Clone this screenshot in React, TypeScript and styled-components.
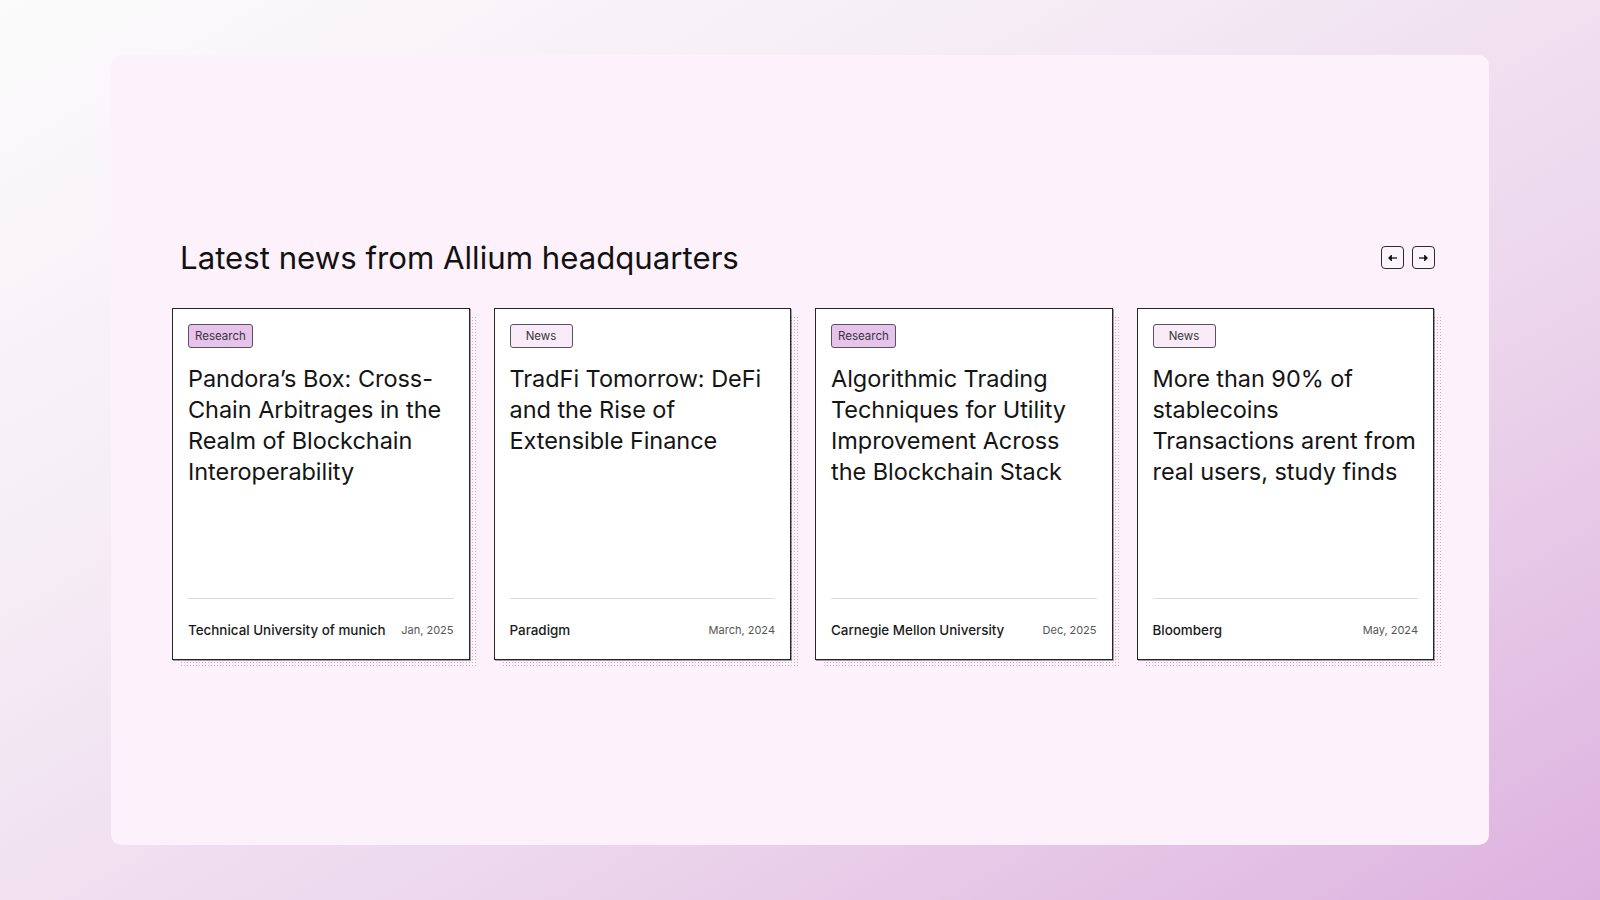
import React from "react";
import styled, { createGlobalStyle } from "styled-components";

const Global = createGlobalStyle`
  html, body { margin: 0; padding: 0; }
  body {
    font-family: "Inter", "Noto Sans", sans-serif;
    color: #141414;
  }
  * { box-sizing: border-box; }
`;

const Page = styled.div`
  width: 1600px;
  height: 900px;
  padding: 55px 111px 55px 111px;
  background: linear-gradient(150deg, #fbfbfb 0%, #f6eef6 30%, #ecd6ec 65%, #ddb2df 100%);
  display: flex;
`;

const Panel = styled.section`
  flex: 1;
  min-width: 0;
  background: #fdf1fb;
  border-radius: 10px;
  display: flex;
  flex-direction: column;
  justify-content: center;
  padding: 6px 46px 0 61px;
  gap: 31px;
`;

const HeaderRow = styled.div`
  display: flex;
  align-items: center;
  justify-content: space-between;
  padding-left: 8px;
  padding-right: 8px;
`;

const Heading = styled.h2`
  margin: 0;
  font-size: 31.2px;
  font-weight: 400;
  letter-spacing: 0;
  color: #111;
`;

const Nav = styled.div`
  display: flex;
  gap: 8px;
`;

const dots = `radial-gradient(circle, rgba(120, 110, 120, 0.45) 0.7px, transparent 1px) 0 0 / 3px 3px`;

const NavButton = styled.button`
  position: relative;
  width: 23px;
  height: 23px;
  padding: 0;
  border: 1px solid #2b2b2b;
  border-radius: 4px;
  background: #fdf3fb;
  display: flex;
  align-items: center;
  justify-content: center;
  cursor: pointer;
  &::after {
    content: "";
    position: absolute;
    left: 3px;
    top: 3px;
    right: -4px;
    bottom: -4px;
    background: ${dots};
    z-index: -1;
    border-radius: 4px;
  }
`;

const Cards = styled.div`
  display: grid;
  grid-template-columns: repeat(4, 1fr);
  gap: 24px;
  margin-right: 9px;
  margin-bottom: 8px;
`;

const CardWrap = styled.div`
  position: relative;
  height: 352px;
  z-index: 0;
  &::before {
    content: "";
    position: absolute;
    left: 8px;
    top: 8px;
    right: -8px;
    bottom: -8px;
    background: ${dots};
    z-index: -1;
  }
`;

const Card = styled.article`
  height: 100%;
  background: #ffffff;
  border: 1px solid #262626;
  box-shadow: 1px 1px 0 rgba(0, 0, 0, 0.35);
  padding: 15px 15px 0 15px;
  display: flex;
  flex-direction: column;
`;

const Tag = styled.span<{ $kind: "Research" | "News" }>`
  align-self: flex-start;
  height: 24px;
  padding: 0 6px;
  min-width: 63px;
  display: inline-flex;
  align-items: center;
  justify-content: center;
  font-size: 11.5px;
  color: #3a3340;
  border: 1px solid #5a5060;
  border-radius: 3px;
  background: ${(p) => (p.$kind === "Research" ? "#e6c3ea" : "#f9eaf8")};
`;

const Title = styled.h3`
  margin: 15px -2px 0 0;
  font-size: 23.5px;
  line-height: 31px;
  font-weight: 400;
  letter-spacing: -0.05px;
  color: #141414;
  flex: 1;
`;

const Footer = styled.div`
  border-top: 1px solid #dcdcdc;
  height: 61px;
  display: flex;
  align-items: center;
  justify-content: space-between;
  padding-top: 2px;
`;

const Source = styled.span`
  font-size: 13.4px;
  font-weight: 500;
  color: #1a1a1a;
`;

const DateText = styled.span`
  font-size: 11px;
  color: #555;
`;

const Arrow = ({ dir }: { dir: "left" | "right" }) => (
  <svg width="11" height="8" viewBox="0 0 11 8" fill="none">
    {dir === "left" ? (
      <>
        <path d="M10 4H2" stroke="#111" strokeWidth="1.3" />
        <path d="M4.5 1L1.5 4L4.5 7Z" fill="#111" stroke="#111" strokeWidth="0.8" strokeLinejoin="round" />
      </>
    ) : (
      <>
        <path d="M1 4H9" stroke="#111" strokeWidth="1.3" />
        <path d="M6.5 1L9.5 4L6.5 7Z" fill="#111" stroke="#111" strokeWidth="0.8" strokeLinejoin="round" />
      </>
    )}
  </svg>
);

type Item = { tag: "Research" | "News"; title: string; source: string; date: string };

const items: Item[] = [
  {
    tag: "Research",
    title: "Pandora’s Box: Cross-Chain Arbitrages in the Realm of Blockchain Interoperability",
    source: "Technical University of munich",
    date: "Jan, 2025",
  },
  {
    tag: "News",
    title: "TradFi Tomorrow: DeFi and the Rise of Extensible Finance",
    source: "Paradigm",
    date: "March, 2024",
  },
  {
    tag: "Research",
    title: "Algorithmic Trading Techniques for Utility Improvement Across the Blockchain Stack",
    source: "Carnegie Mellon University",
    date: "Dec, 2025",
  },
  {
    tag: "News",
    title: "More than 90% of stablecoins Transactions arent from real users, study finds",
    source: "Bloomberg",
    date: "May, 2024",
  },
];

export default function App() {
  return (
    <>
      <Global />
      <Page>
        <Panel>
          <HeaderRow>
            <Heading>Latest news from Allium headquarters</Heading>
            <Nav>
              <NavButton aria-label="Previous">
                <Arrow dir="left" />
              </NavButton>
              <NavButton aria-label="Next">
                <Arrow dir="right" />
              </NavButton>
            </Nav>
          </HeaderRow>
          <Cards>
            {items.map((it) => (
              <CardWrap key={it.title}>
                <Card>
                  <Tag $kind={it.tag}>{it.tag}</Tag>
                  <Title>{it.title}</Title>
                  <Footer>
                    <Source>{it.source}</Source>
                    <DateText>{it.date}</DateText>
                  </Footer>
                </Card>
              </CardWrap>
            ))}
          </Cards>
        </Panel>
      </Page>
    </>
  );
}
